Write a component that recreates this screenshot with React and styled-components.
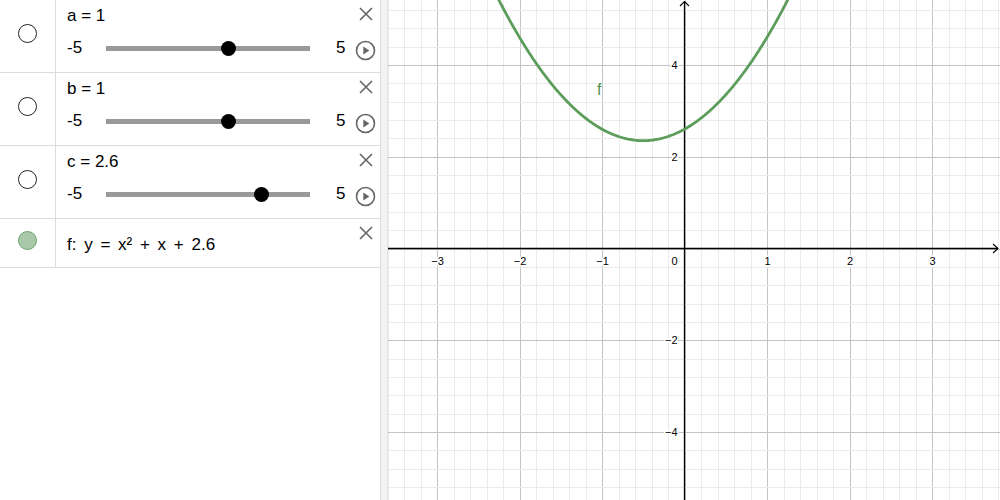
import React from 'react';
import styled, {createGlobalStyle} from "styled-components";

const GlobalStyle = createGlobalStyle`
html, body {
margin: 0;
padding: 0;
background: #fff;
}
body {
font-family: "Liberation Sans", Arial, sans-serif;
color: #000;
overflow: hidden;
}
`;

const Page = styled.div`
display: flex;
width: 1000px;
height: 500px;
overflow: hidden;
`;

const AlgebraPanel = styled.div`
width: 380px;
flex-shrink: 0;
display: flex;
flex-direction: column;
background: #fff;
`;

const Divider = styled.div`
width: 6px;
flex-shrink: 0;
background: #f3f3f3;
border-left: 1px solid #dcdcdc;
border-right: 1px solid #e4e4e4;
`;

const GraphArea = styled.div`
flex-grow: 1;
position: relative;
background: #fff;
`;

const Row = styled.div`
display: flex;
height: ${p => p.$h}px;
border-bottom: 1px solid #dcdcdc;
`;

const MarbleCell = styled.div`
width: 56px;
flex-shrink: 0;
display: flex;
align-items: center;
justify-content: center;
padding-bottom: 6px;
box-sizing: border-box;
border-right: 1px solid #dcdcdc;
`;

const Marble = styled.div`
width: 17px;
height: 17px;
border-radius: 50%;
border: 1px solid ${p => p.$on ? "#6aa46a" : "#222"};
background: ${p => p.$on ? "#a9c8a9" : "#fff"};
`;

const Content = styled.div`
flex-grow: 1;
display: flex;
padding-left: 11px;
`;

const Main = styled.div`
flex-grow: 1;
display: flex;
flex-direction: column;
padding-top: ${p => p.$top}px;
`;

const Label = styled.div`
font-size: 17px;
line-height: 20px;
white-space: nowrap;
`;

const Formula = styled(Label)`
word-spacing: 3px;
`;

const SliderLine = styled.div`
display: flex;
align-items: center;
height: 20px;
margin-top: 12px;
font-size: 17px;
`;

const MinLabel = styled.span`
width: 39px;
`;

const Track = styled.div`
position: relative;
width: 204px;
height: 5px;
background: #999;
`;

const Knob = styled.div`
position: absolute;
top: 50%;
width: 15px;
height: 15px;
margin: -7.5px 0 0 -7.5px;
border-radius: 50%;
background: #000;
`;

const MaxLabel = styled.span`
margin-left: 26px;
`;

const Actions = styled.div`
width: 28px;
flex-shrink: 0;
display: flex;
flex-direction: column;
align-items: center;
padding-top: 7px;
`;

const IconButton = styled.div`
display: flex;
margin-top: ${p => p.$mt || 0}px;
margin-left: ${p => p.$ml || 0}px;
`;

const Close = () => (
    <svg width="14" height="14" viewBox="0 0 14 14">
        <path d="M1 1 L13 13 M13 1 L1 13" stroke="#666" strokeWidth="1.6" fill="none"/>
    </svg>
);

const Play = () => (
    <svg width="21" height="21" viewBox="0 0 21 21">
        <circle cx="10.5" cy="10.5" r="9" stroke="#666" strokeWidth="1.6" fill="none"/>
        <path d="M8.3 6.6 L14.4 10.5 L8.3 14.4 Z" fill="#666"/>
    </svg>
);

const sliders = [
    {name: "a", value: 1},
    {name: "b", value: 1},
    {name: "c", value: 2.6},
];

const SliderRow = ({name, value}) => (
    <Row $h={72}>
        <MarbleCell><Marble/></MarbleCell>
        <Content>
            <Main $top={6}>
                <Label>{name} = {value}</Label>
                <SliderLine>
                    <MinLabel>-5</MinLabel>
                    <Track>
                        <Knob style={{left: `${(value + 5) / 10 * 100}%`}}/>
                    </Track>
                    <MaxLabel>5</MaxLabel>
                </SliderLine>
            </Main>
            <Actions>
                <IconButton><Close/></IconButton>
                <IconButton $mt={19} $ml={-2}><Play/></IconButton>
            </Actions>
        </Content>
    </Row>
);

// graph view
const W = 613, H = 500;
const OX = 296.5, OY = 248.5;
const UX = 82.5, UY = 45.9;
const GREEN = "#5c9d5c";

const Svg = styled.svg`
display: block;
font-family: "Liberation Sans", Arial, sans-serif;
`;

const range = (a, b, s) => {
    const out = [];
    for (let v = a; v <= b + 1e-9; v += s) out.push(Math.round(v * 10) / 10);
    return out;
};

const Graph = () => {
    const xs = range(-4, 4, 0.2);
    const ys = range(-6, 6, 0.4);
    const pts = [];
    for (let x = -2.4; x <= 1.4; x += 0.02) {
        const y = x * x + x + 2.6;
        pts.push(`${(OX + x * UX).toFixed(1)},${(OY - y * UY).toFixed(1)}`);
    }
    const halo = {paintOrder: "stroke", stroke: "#fff", strokeWidth: 3, strokeLinejoin: "round"};
    return (
        <Svg width={W} height={H} viewBox={`0 0 ${W} ${H}`}>
            {xs.map(x => {
                const major = Math.abs(x - Math.round(x)) < 1e-6;
                const px = Math.round(OX + x * UX) + 0.5;
                return <line key={"x" + x} x1={px} x2={px} y1={0} y2={H}
                             stroke={major ? "#c4c4c4" : "#ebebeb"} strokeWidth="1"/>;
            })}
            {ys.map(y => {
                const major = Math.abs(y / 2 - Math.round(y / 2)) < 1e-6;
                const py = Math.round(OY - y * UY) + 0.5;
                return <line key={"y" + y} y1={py} y2={py} x1={0} x2={W}
                             stroke={major ? "#c4c4c4" : "#ebebeb"} strokeWidth="1"/>;
            })}

            <line x1={0} x2={W - 3} y1={OY} y2={OY} stroke="#000" strokeWidth="1.3"/>
            <path d={`M${W - 8} ${OY - 4.5} L${W - 3} ${OY} L${W - 8} ${OY + 4.5}`} stroke="#000" strokeWidth="1.1" fill="none"/>
            <line x1={OX} x2={OX} y1={1.5} y2={H} stroke="#000" strokeWidth="1.3"/>
            <path d={`M${OX - 4.5} 6 L${OX} 1.5 L${OX + 4.5} 6`} stroke="#000" strokeWidth="1.1" fill="none"/>

            {[-3, -2, -1, 1, 2, 3].map(x => (
                <text key={"lx" + x} x={OX + x * UX + 0.5} y={OY + 16} fontSize="11" textAnchor="middle" style={halo}>
                    {x < 0 ? `\u2212${-x}` : x}
                </text>
            ))}
            <text x={OX - 7} y={OY + 16} fontSize="11" textAnchor="end" style={halo}>0</text>
            {[4, 2, -2, -4].map(y => (
                <text key={"ly" + y} x={OX - 7} y={OY - y * UY + 4} fontSize="11" textAnchor="end" style={halo}>
                    {y < 0 ? `\u2212${-y}` : y}
                </text>
            ))}

            <polyline points={pts.join(" ")} stroke={GREEN} strokeWidth="2.8" fill="none" strokeLinejoin="round"/>
            <text x={209} y={95} fontSize="16" fill="#4f934f">f</text>
        </Svg>
    );
};

const App = () => <>
    <GlobalStyle/>
    <Page>
        <AlgebraPanel>
            {sliders.map(s => <SliderRow key={s.name} {...s}/>)}
            <Row $h={48}>
                <MarbleCell><Marble $on/></MarbleCell>
                <Content>
                    <Main $top={16}>
                        <Formula>f: y = x² + x + 2.6</Formula>
                    </Main>
                    <Actions>
                        <IconButton><Close/></IconButton>
                    </Actions>
                </Content>
            </Row>
        </AlgebraPanel>
        <Divider/>
        <GraphArea>
            <Graph/>
        </GraphArea>
    </Page>
</>;

export default App;
